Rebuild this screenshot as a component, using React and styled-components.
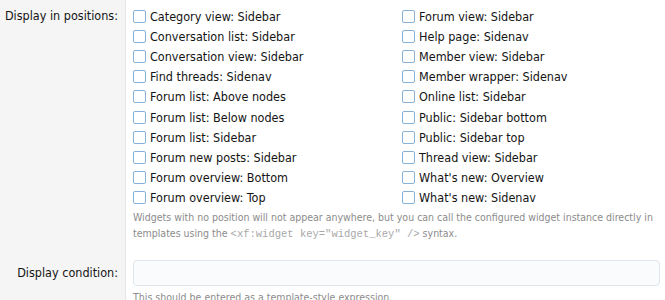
import React from "react";
import styled, { createGlobalStyle } from "styled-components";

const GlobalStyle = createGlobalStyle`
  html, body {
    margin: 0;
    padding: 0;
    background: #fff;
  }
  body {
    font-family: "Comic Sans MS", "DejaVu Sans", sans-serif;
    font-stretch: condensed;
    color: #141414;
  }
`;

const positions = [
  "Category view: Sidebar",
  "Forum view: Sidebar",
  "Conversation list: Sidebar",
  "Help page: Sidenav",
  "Conversation view: Sidebar",
  "Member view: Sidebar",
  "Find threads: Sidenav",
  "Member wrapper: Sidenav",
  "Forum list: Above nodes",
  "Online list: Sidebar",
  "Forum list: Below nodes",
  "Public: Sidebar bottom",
  "Forum list: Sidebar",
  "Public: Sidebar top",
  "Forum new posts: Sidebar",
  "Thread view: Sidebar",
  "Forum overview: Bottom",
  "What's new: Overview",
  "Forum overview: Top",
  "What's new: Sidenav",
];

export default function App() {
  return (
    <>
      <GlobalStyle />
      <Form>
        <Row>
          <Label $pad={6}>
            <LabelText>Display in positions:</LabelText>
          </Label>
          <Control $pad={6}>
            <CheckGrid>
              {positions.map((p) => (
                <CheckItem key={p}>
                  <Box />
                  <span>{p}</span>
                </CheckItem>
              ))}
            </CheckGrid>
            <Hint>
              Widgets with no position will not appear anywhere, but you can call
              the configured widget instance directly in templates using the{" "}
              <Code>&lt;xf:widget key="widget_key" /&gt;</Code> syntax.
            </Hint>
          </Control>
        </Row>
        <Row>
          <Label $pad={10}>
            <LabelText $top={3}>Display condition:</LabelText>
          </Label>
          <Control $pad={10}>
            <Input />
            <Hint $top={3}>This should be entered as a template-style expression.</Hint>
          </Control>
        </Row>
      </Form>
    </>
  );
}

const Form = styled.div`
  display: flex;
  flex-direction: column;
  width: 665px;
  height: 300px;
  overflow: hidden;
`;

const Row = styled.div`
  display: flex;
`;

const Label = styled.div`
  width: 126px;
  flex-shrink: 0;
  box-sizing: border-box;
  background: #f5f5f5;
  border-right: 1px solid #e6e6e6;
  padding: ${({ $pad }) => $pad}px 7px 0 0;
  display: flex;
  flex-direction: column;
  align-items: flex-end;
`;

const LabelText = styled.div`
  font-size: 12.5px;
  line-height: 20px;
  white-space: nowrap;
  margin-top: ${({ $top }) => $top || 0}px;
`;

const Control = styled.div`
  flex: 1;
  padding: ${({ $pad }) => $pad}px 5px 8px 7px;
  min-width: 0;
`;

const CheckGrid = styled.div`
  display: grid;
  grid-template-columns: 269px 1fr;
`;

const CheckItem = styled.label`
  display: flex;
  align-items: center;
  height: 20.2px;
  font-size: 12.5px;
  gap: 4px;
  white-space: nowrap;
`;

const Box = styled.span`
  width: 13px;
  height: 13px;
  box-sizing: border-box;
  border: 1.5px solid #86b1d9;
  border-radius: 2px;
  background: #fff;
  flex-shrink: 0;
`;

const Hint = styled.div`
  font-size: 10.5px;
  line-height: 16px;
  color: #8c8c8c;
  margin-top: ${({ $top }) => $top || 1}px;
`;

const Code = styled.code`
  font-family: "Liberation Mono", "DejaVu Sans Mono", monospace;
  font-size: 10.5px;
  color: #a8a8a8;
`;

const Input = styled.div`
  height: 26px;
  box-sizing: border-box;
  border: 1px solid #dfe5ec;
  border-radius: 4px;
  background: #f9fbfd;
`;
